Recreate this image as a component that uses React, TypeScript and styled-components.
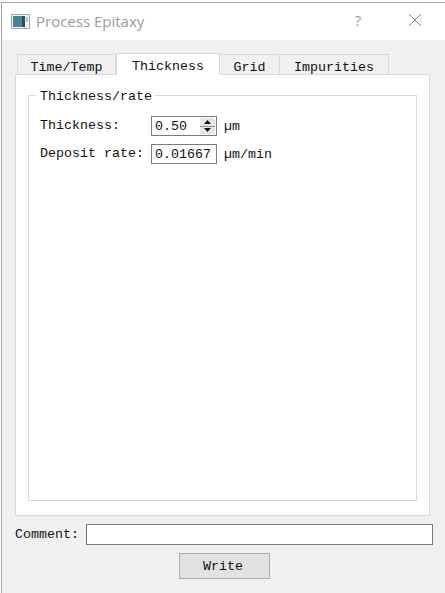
import styled, { createGlobalStyle } from "styled-components";

const GlobalStyle = createGlobalStyle`
  html, body {
    margin: 0;
    padding: 0;
    background: #fff;
    overflow: hidden;
  }
`;

const Desktop = styled.div`
  width: 445px;
  height: 593px;
  padding: 2px 0 0 1px;
  box-sizing: border-box;
  background: #fff;
  font-family: "Liberation Mono", "DejaVu Sans Mono", monospace;
  font-size: 13.33px;
  color: #111;
`;

const Dialog = styled.div`
  height: 100%;
  display: flex;
  flex-direction: column;
  border-top: 1px solid #a4a4a4;
  border-left: 1px solid #a4a4a4;
`;

const TitleBar = styled.header`
  height: 37px;
  flex: none;
  display: flex;
  align-items: center;
  background: #fff;
  padding-left: 9px;
`;

const AppIcon = styled.svg`
  width: 19px;
  height: 15px;
  flex: none;
  margin-top: -1px;
`;

const TitleText = styled.span`
  margin: -2px 0 0 6px;
  font-family: "Open Sans", "Noto Sans", sans-serif;
  font-size: 15px;
  color: #9b9b9b;
  flex: 1;
`;

const TitleButton = styled.button<{ $width: number; $gap: number }>`
  width: ${(p) => p.$width}px;
  margin-right: ${(p) => p.$gap}px;
  height: 37px;
  padding: 0 0 3px;
  border: 0;
  background: none;
  display: flex;
  align-items: center;
  justify-content: center;
  color: #a0a0a0;
  font-family: "Open Sans", sans-serif;
  font-size: 15px;
`;

const Body = styled.main`
  flex: 1;
  display: flex;
  flex-direction: column;
  background: #f0f0f0;
  padding: 13px 10px 0 13px;
`;

const TabBar = styled.div`
  display: flex;
  align-items: flex-end;
  height: 22px;
  padding-left: 2px;
  margin-bottom: -1px;
  position: relative;
  z-index: 1;
`;

const Tab = styled.div<{ $width: number; $active?: boolean }>`
  width: ${(p) => p.$width}px;
  height: ${(p) => (p.$active ? 22 : 21)}px;
  box-sizing: border-box;
  padding-top: ${(p) => (p.$active ? 4 : 5)}px;
  display: flex;
  align-items: center;
  justify-content: center;
  background: ${(p) => (p.$active ? "#fff" : "#f0f0f0")};
  border: 1px solid #d9d9d9;
  border-left-width: ${(p) => (p.$active ? 1 : 0)}px;
  border-bottom-color: ${(p) => (p.$active ? "#fff" : "#d9d9d9")};
  &:first-child {
    border-left-width: 1px;
  }
`;

const TabPane = styled.section`
  width: 415px;
  height: 442px;
  box-sizing: border-box;
  background: #fff;
  border: 1px solid #d9d9d9;
  padding: 13px 12px 14px;
`;

const GroupBox = styled.fieldset`
  margin: 0;
  height: 413px;
  box-sizing: border-box;
  border: 1px solid #d9d9d9;
  padding: 14px 0 0 11px;
  display: grid;
  grid-template-columns: 111px 66px auto;
  grid-auto-rows: 20px;
  row-gap: 8px;
  align-content: start;
  align-items: center;
  min-inline-size: 0;
`;

const GroupTitle = styled.legend`
  margin-left: -4px;
  padding: 0 3px 0 4px;
  line-height: 14px;
  position: relative;
  top: 2px;
`;

const FieldLabel = styled.label`
  white-space: pre;
  margin-top: -2px;
`;

const SpinBox = styled.div`
  width: 66px;
  height: 20px;
  box-sizing: border-box;
  display: flex;
  align-items: center;
  justify-content: space-between;
  border: 1px solid #7a7a7a;
  background: #fff;
  padding: 0 1px 0 3px;
`;

const SpinButtons = styled.div`
  width: 15px;
  height: 16px;
  display: flex;
  flex-direction: column;
  gap: 1px;
  background: #8f8f8f;
`;

const SpinStep = styled.div`
  flex: 1;
  display: flex;
  align-items: center;
  justify-content: center;
  background: #e6e6e6;
`;

const ArrowBox = styled.svg`
  display: block;
  width: 7px;
  height: 4px;
`;

const TextBox = styled.div`
  width: 66px;
  height: 20px;
  box-sizing: border-box;
  display: flex;
  align-items: center;
  border: 1px solid #7a7a7a;
  background: #fff;
  padding-left: 3px;
`;

const Unit = styled.span`
  margin-left: 7px;
`;

const CommentRow = styled.div`
  display: flex;
  align-items: center;
  height: 21px;
  margin-top: 8px;
`;

const CommentLabel = styled.label`
  width: 71px;
  flex: none;
`;

const CommentInput = styled.div`
  width: 347px;
  height: 21px;
  box-sizing: border-box;
  border: 1px solid #7a7a7a;
  background: #fff;
`;

const ButtonRow = styled.div`
  display: flex;
  padding-left: 164px;
  margin-top: 8px;
`;

const WriteButton = styled.button`
  width: 91px;
  height: 26px;
  padding: 0 3px 0 0;
  font: inherit;
  color: inherit;
  background: #e1e1e1;
  border: 1px solid #adadad;
`;

const tabs = [
  { name: "Time/Temp", width: 99 },
  { name: "Thickness", width: 104, active: true },
  { name: "Grid", width: 60 },
  { name: "Impurities", width: 109 },
];

function App() {
  return (
    <Desktop>
      <GlobalStyle />
      <Dialog>
        <TitleBar>
          <AppIcon viewBox="0 0 19 15">
            <rect x="0.5" y="0.5" width="18" height="14" fill="#f4f4f4" stroke="#a8a8a8" />
            <rect x="2" y="2" width="9" height="11" fill="#3f8a8c" />
            <rect x="2" y="8" width="9" height="5" fill="#4c7fa8" />
            <rect x="11" y="2" width="3" height="11" fill="#30505c" />
            <rect x="15" y="3" width="2" height="5" fill="#a9c4c4" />
          </AppIcon>
          <TitleText>Process Epitaxy</TitleText>
          <TitleButton $width={46} $gap={15}>?</TitleButton>
          <TitleButton $width={38} $gap={11}>
            <svg width="14" height="14" viewBox="0 0 14 14">
              <path d="M1 1L13 13M13 1L1 13" stroke="#8a8a8a" strokeWidth="1" fill="none" />
            </svg>
          </TitleButton>
        </TitleBar>
        <Body>
          <TabBar>
            {tabs.map((t) => (
              <Tab key={t.name} $width={t.width} $active={t.active}>
                {t.name}
              </Tab>
            ))}
          </TabBar>
          <TabPane>
            <GroupBox>
              <GroupTitle>Thickness/rate</GroupTitle>
              <FieldLabel>Thickness:</FieldLabel>
              <SpinBox>
                0.50
                <SpinButtons>
                  <SpinStep>
                    <ArrowBox viewBox="0 0 7 4">
                      <path d="M3.5 0L7 4H0Z" fill="#111" />
                    </ArrowBox>
                  </SpinStep>
                  <SpinStep>
                    <ArrowBox viewBox="0 0 7 4">
                      <path d="M3.5 4L7 0H0Z" fill="#111" />
                    </ArrowBox>
                  </SpinStep>
                </SpinButtons>
              </SpinBox>
              <Unit>µm</Unit>
              <FieldLabel>Deposit rate:</FieldLabel>
              <TextBox>0.01667</TextBox>
              <Unit>µm/min</Unit>
            </GroupBox>
          </TabPane>
          <CommentRow>
            <CommentLabel>Comment:</CommentLabel>
            <CommentInput />
          </CommentRow>
          <ButtonRow>
            <WriteButton>Write</WriteButton>
          </ButtonRow>
        </Body>
      </Dialog>
    </Desktop>
  );
}

export default App;
